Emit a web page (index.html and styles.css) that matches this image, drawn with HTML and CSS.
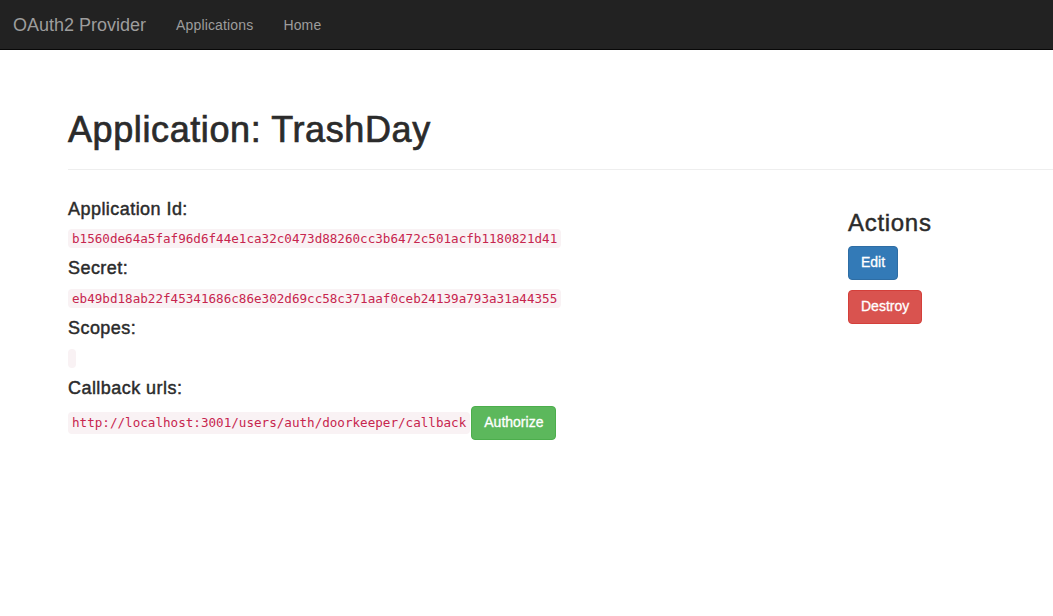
FILE: index.html
```html
<!DOCTYPE html>
<html>
<head>
<meta charset="utf-8">
<title>OAuth2 Provider</title>
<link rel="stylesheet" href="styles.css">
</head>
<body>
<nav class="navbar">
  <a class="brand" href="#">OAuth2 Provider</a>
  <ul class="nav">
    <li><a href="#">Applications</a></li>
    <li><a href="#">Home</a></li>
  </ul>
</nav>
<div class="container">
  <div class="page-header">
    <h1>Application: TrashDay</h1>
  </div>
  <div class="row">
    <div class="main-col">
      <h4>Application Id:</h4>
      <p><code>b1560de64a5faf96d6f44e1ca32c0473d88260cc3b6472c501acfb1180821d41</code></p>
      <h4>Secret:</h4>
      <p><code>eb49bd18ab22f45341686c86e302d69cc58c371aaf0ceb24139a793a31a44355</code></p>
      <h4>Scopes:</h4>
      <p><code></code></p>
      <h4>Callback urls:</h4>
      <div class="callback">
        <code>http://localhost:3001/users/auth/doorkeeper/callback</code>
        <a class="btn btn-success" href="#">Authorize</a>
      </div>
    </div>
    <div class="side-col">
      <h3>Actions</h3>
      <p><a class="btn btn-primary" href="#">Edit</a></p>
      <p><button class="btn btn-danger" type="button">Destroy</button></p>
    </div>
  </div>
</div>
</body>
</html>
```
FILE: styles.css
```css
body {
  margin: 0;
  font-family: "Liberation Sans", Arial, sans-serif;
  font-size: 14px;
  line-height: 1.42857;
  color: #333;
  background: #fff;
}
a { text-decoration: none; }

.navbar {
  display: flex;
  align-items: center;
  height: 50px;
  background: #222;
  border-bottom: 1px solid #080808;
  box-sizing: border-box;
}
.brand {
  padding: 15px 15px 15px 13px;
  font-size: 18px;
  line-height: 20px;
  color: #9d9d9d;
}
.nav {
  display: flex;
  list-style: none;
  margin: 0;
  padding: 0;
}
.nav a {
  display: block;
  padding: 15px;
  line-height: 20px;
  color: #9d9d9d;
  letter-spacing: 0.15px;
}

.container {
  margin-left: 53px;
  padding: 0 0 0 15px;
}
.page-header {
  margin: 60px 0 20px;
  padding-bottom: 9px;
  border-bottom: 1px solid #eee;
}
h1, h3, h4 {
  font-weight: 500;
  line-height: 1.1;
  color: #2b2b2b;
  -webkit-text-stroke: 0.45px currentColor;
}
h1 {
  margin: 0 0 10px;
  font-size: 36px;
  letter-spacing: 0.6px;
  -webkit-text-stroke: 0.7px currentColor;
}
.row {
  display: grid;
  grid-template-columns: 750px 1fr;
  column-gap: 30px;
}
h3, h4 {
  margin: 0 0 10px;
}
h4 {
  font-size: 18px;
  margin-top: 10px;
  letter-spacing: 0.45px;
}
h3 {
  font-size: 24px;
  margin-top: 20px;
  letter-spacing: 0.7px;
}
.main-col p, .side-col p {
  margin: 0 0 10px;
}
.main-col h4 + p { margin-bottom: 0; }
.main-col p + h4 { margin-top: 10px; }

code {
  font-family: "DejaVu Sans Mono", "Liberation Mono", monospace;
  font-size: 90%;
  padding: 2px 4px;
  color: #c7254e;
  background: #f9f2f4;
  border-radius: 4px;
}
.callback {
  display: flex;
  align-items: center;
  gap: 1px;
  margin-top: -3px;
}

.btn {
  display: inline-block;
  padding: 6px 12px;
  font-family: inherit;
  font-size: 14px;
  line-height: 1.42857;
  border: 1px solid transparent;
  border-radius: 4px;
  color: #fff;
  cursor: pointer;
  vertical-align: middle;
  -webkit-text-stroke: 0.3px currentColor;
}
.btn-primary { background: #337ab7; border-color: #2e6da4; }
.btn-success { background: #5cb85c; border-color: #4cae4c; }
.btn-danger { background: #d9534f; border-color: #d43f3a; }
```
